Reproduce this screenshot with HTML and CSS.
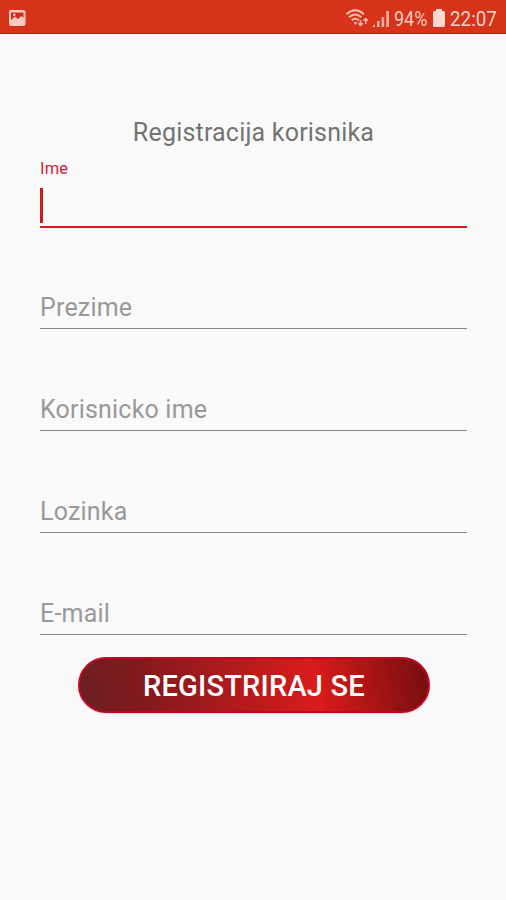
FILE: index.html
```html
<!DOCTYPE html>
<html lang="hr">
<head>
<meta charset="utf-8">
<title>Registracija korisnika</title>
<link rel="stylesheet" href="styles.css">
</head>
<body>
<header class="status">
  <svg class="picture" width="18" height="18" viewBox="0 0 18 18"><rect x="1" y="1" width="16.500" height="16" rx="2" fill="#ffc9bd"/><path d="M3 3.500h12.500V9l-2-2L10 10 7 7.500 3 11z" fill="#cc2d18"/><circle cx="6.300" cy="5.800" r="1.300" fill="#ffc9bd"/></svg>
  <div class="system">
    <svg class="wifi" width="24" height="20" viewBox="0 0 24 20" fill="none" stroke="#ffc0b2" stroke-width="1.900"><path d="M.5 5.200Q9-2.600 18 5.200M3 8.300Q9 2.500 15.500 8.300M5.800 11.300Q9.200 8.100 12.800 11.300"/><path d="M7.500 13h4l-2 3z" fill="#ffc0b2" stroke="none"/><path d="M14.500 11v5.500m-2.200-2.200 2.200 2.200 2.200-2.200M19.700 15V9.500m-2.200 2.200 2.200-2.200 2.200 2.200" stroke-width="1.500"/></svg>
    <svg class="signal" width="18" height="18" viewBox="0 0 18 18" fill="#fbae9e"><path d="M0 17l3-3v3zM5 11h2.600v6H5zM9.600 7h2.600v10H9.600zM14.300 1h2.700v16h-2.700z"/></svg>
    <span class="percent">94%</span>
    <svg class="battery" width="12" height="18" viewBox="0 0 12 18"><path d="M3 0h6v2h1.500Q12 2 12 3.500v13Q12 18 10.500 18h-9Q0 18 0 16.500v-13Q0 2 1.500 2H3z" fill="#ffd8d0"/></svg>
    <span class="clock">22:07</span>
  </div>
</header>
<main>
  <h1>Registracija korisnika</h1>
  <form>
    <div class="field active"><label>Ime</label><span class="caret"></span></div>
    <div class="field first"><label>Prezime</label></div>
    <div class="field"><label>Korisnicko ime</label></div>
    <div class="field"><label>Lozinka</label></div>
    <div class="field"><label>E-mail</label></div>
    <button type="button"><span>REGISTRIRAJ SE</span></button>
  </form>
</main>
</body>
</html>
```
FILE: styles.css
```css
* { box-sizing: border-box; }
body { margin: 0; height: 900px; background: #fafafa; font-family: Roboto, sans-serif; }
.status { height: 34px; background: #d7321a; border-bottom: 1px solid #c91510; padding: 0 9px 0 8px; display: flex; justify-content: space-between; color: #ffcabe; }
.picture { margin-top: 9px; }
.system { display: flex; align-items: flex-start; }
.wifi { margin: 9px 2px 0 0; }
.signal { margin: 10px 4px 0 0; }
.percent, .clock { font-size: 20px; line-height: 24px; margin-top: 7px; white-space: nowrap; transform-origin: left; }
.percent { width: 38px; transform: scaleX(.9); }
.battery { margin: 9px 5px 0 1px; }
.clock { width: 47px; transform: scaleX(.94); color: #ffd5cb; }
main { padding: 80px 39px 0 40px; }
h1 { margin: 0; height: 36px; line-height: 37px; text-align: center; font-size: 25px; font-weight: 400; letter-spacing: .2px; color: #737373; white-space: nowrap; }
.field { height: 102px; border-bottom: 1px solid #858585; display: flex; align-items: flex-end; padding-bottom: 5px; }
.field.first { height: 101px; }
.field label { font-size: 25px; line-height: 30px; letter-spacing: .2px; color: #999; white-space: nowrap; }
.field.active { height: 78px; border-bottom: 2px solid #d51c1c; padding: 9px 0 3px; flex-direction: column; align-items: flex-start; justify-content: space-between; }
.field.active label { font-size: 16.500px; line-height: 20px; color: #ce2338; }
.caret { width: 3px; height: 35px; background: #cc1d1d; }
button { display: block; width: 352px; height: 56px; margin: 22px 0 0 38px; padding: 0; border: 2px solid #c00824; border-radius: 28px; background: linear-gradient(80deg, #681f22 0%, #84191c 20%, #da1b1b 67%, #720d0d 100%) border-box; color: #fff; font: 500 29px/54px Roboto, sans-serif; letter-spacing: .2px; white-space: nowrap; box-shadow: 0 1px 2px #c5082a33; }
```
